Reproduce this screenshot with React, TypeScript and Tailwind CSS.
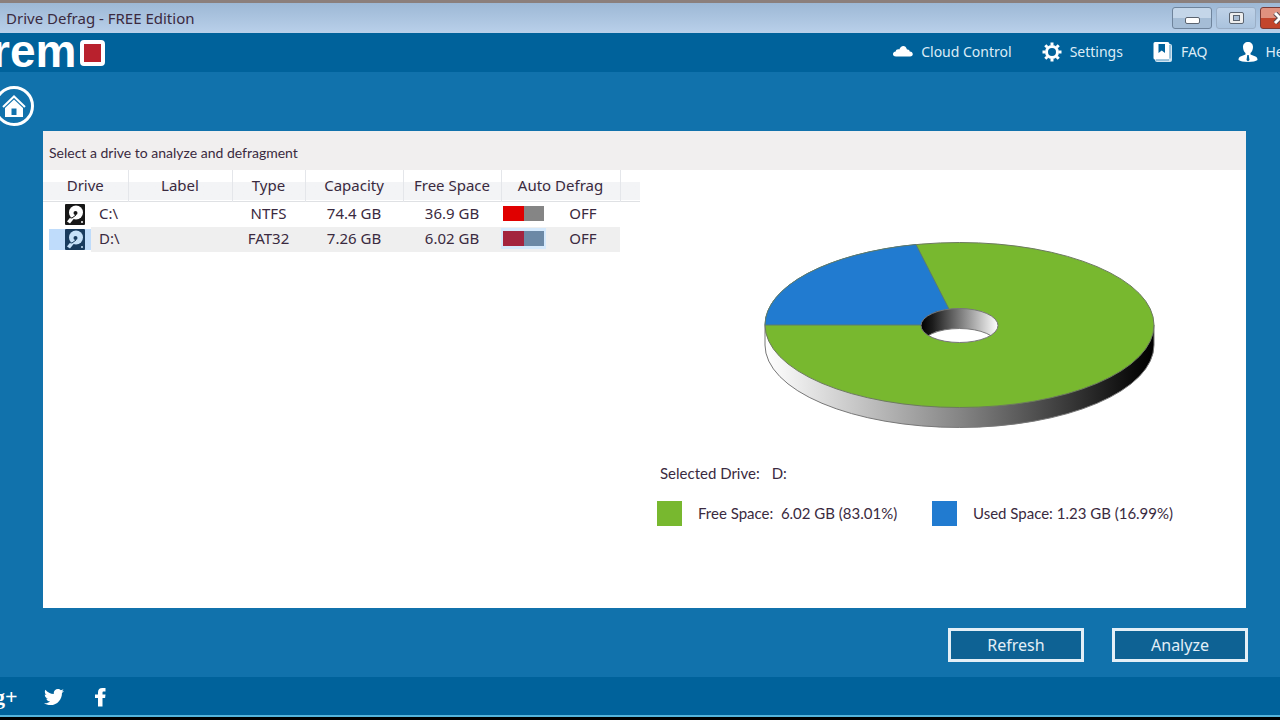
import React, { useState } from 'react';
import { FaTwitter } from 'react-icons/fa';

interface Drive {
  id: string;
  type: string;
  capacity: string;
  free: string;
}

const drives: Drive[] = [
  { id: 'C', type: 'NTFS', capacity: '74.4 GB', free: '36.9 GB' },
  { id: 'D', type: 'FAT32', capacity: '7.26 GB', free: '6.02 GB' },
];

const CloudIcon = () => (
  <svg viewBox="0 0 20 20" className="h-5 w-5" aria-hidden="true">
    <path
      fill="#fff"
      d="M3 14.500c-4 0-4-4.500-.3-5 .2-2 2.300-2.700 3.600-1.900C7.300 3.500 12.500 2 14 7.500c1.500-.3 2.600.5 2.700 2C20.500 9.500 21 14.500 17 14.500z"
    />
  </svg>
);

const GearIcon = () => (
  <svg viewBox="0 0 20 20" className="h-5 w-5" aria-hidden="true">
    <g fill="none" stroke="#fff" strokeWidth="3">
      <circle cx="10" cy="10" r="5.500" />
      <path d="M10 .5v3M10 16.500v3M.5 10h3M16.500 10h3M3.300 3.300l2 2M14.700 14.700l2 2M3.300 16.700l2-2M14.700 5.300l2-2" />
    </g>
  </svg>
);

const BookIcon = () => (
  <svg viewBox="0 0 20 20" className="h-5 w-5" aria-hidden="true">
    <path fill="#cfe3f0" d="M4 2h13a2 2 0 0 1 2 2v14a2 2 0 0 1-2 2H4a2 2 0 0 1-2-2z" />
    <path fill="#fff" d="M2 0h12.500a2 2 0 0 1 2 2v13.500a2 2 0 0 1-2 2H2a1.500 1.500 0 0 1-1.500-1.500V1.500A1.500 1.500 0 0 1 2 0z" />
    <path fill="#00629b" d="M5.500 2h6.500v9L8.700 8.500 5.500 11z" />
    <path stroke="#5d9cc3" d="M17 3v13.500M3 18h13" />
  </svg>
);

const PersonIcon = () => (
  <svg viewBox="0 0 20 20" className="h-5 w-5" aria-hidden="true">
    <path
      fill="#fff"
      d="M10 0c3 0 5 2 5 5 0 2.600-1 4.700-2.500 6v1.500l5 2c1.300.6 2 1.700 2 3.500-1.500 1.300-5 2-9.500 2s-8-.7-9.500-2c0-1.800.7-2.900 2-3.500l5-2V11C6 9.700 5 7.600 5 5c0-3 2-5 5-5z"
    />
    <path fill="#00629b" d="M9.300 13h1.400l.8 5-1.500 1.500L8.500 18z" />
  </svg>
);

const FacebookIcon = () => (
  <svg viewBox="0 0 20 20" className="h-5 w-5" aria-hidden="true">
    <path
      fill="#fff"
      d="M15.500 1v3.500h-1.800c-.9 0-1.200.4-1.200 1.300v1.700h3l-.4 3.500h-2.600V19.500H8V11H5V7.500h3V5.300C8 2.500 9.600 1 12.300 1z"
    />
  </svg>
);

const DiskIcon = ({ selected }: { selected: boolean }) => (
  <svg viewBox="0 0 20 21" className="block h-[21px] w-5" aria-hidden="true">
    <rect width="20" height="21" rx="1" fill={selected ? '#183b5e' : '#171717'} />
    <g fill={selected ? '#c5e0f8' : '#fff'}>
      <circle cx="11" cy="8.500" r="7" />
      <path d="M2 17.500l4-5 3 2-4 5z" />
      <circle cx="17" cy="18" r="1" />
    </g>
    <circle cx="10.500" cy="9" r="2" fill={selected ? '#183b5e' : '#171717'} />
    <path d="M2 13l5 1 4-3" fill="none" stroke={selected ? '#183b5e' : '#171717'} />
  </svg>
);

const HomeIcon = () => (
  <svg viewBox="0 0 24 22" className="h-[22px] w-6" aria-hidden="true">
    <path fill="none" stroke="#fff" strokeWidth="2" d="M1 12L12 1.500 23 12" />
    <path fill="#fff" d="M3 13l9-8.500 9 8.500v9H3z" />
    <path fill="#1172ac" d="M9.500 13.500h5V20h-5z" />
  </svg>
);

const UsageChart = () => (
  <svg viewBox="764 241 392 188" className="h-[188px] w-[392px]" role="img" aria-label="Drive usage">
    <defs>
      <linearGradient id="side">
        <stop offset="0" stopColor="#fff" />
        <stop offset="0.050" stopColor="#f4f4f4" />
        <stop offset="0.500" stopColor="#858585" />
        <stop offset="0.950" stopColor="#0a0a0a" />
        <stop offset="1" stopColor="#000" />
      </linearGradient>
      <linearGradient id="hole">
        <stop offset="0" stopColor="#000" />
        <stop offset="0.150" stopColor="#1c1c1c" />
        <stop offset="1" stopColor="#fff" />
      </linearGradient>
      <clipPath id="holeClip">
        <ellipse cx="959.500" cy="325.500" rx="38.500" ry="17" />
      </clipPath>
    </defs>
    <path d="M765 325v20a194.500 82.500 0 0 0 389 0v-20z" fill="url(#side)" stroke="#777" />
    <ellipse cx="959.500" cy="325" rx="194.500" ry="82.500" fill="#78b82f" stroke="#6d7a60" />
    <path d="M765 325A194.500 82.500 0 0 1 916 244.500L949 309L949 325z" fill="#217bd0" stroke="#5b7a70" />
    <ellipse cx="959.500" cy="325.500" rx="38.500" ry="17" fill="url(#hole)" />
    <ellipse cx="959.500" cy="345.500" rx="38.500" ry="17" fill="#fff" stroke="#777" clipPath="url(#holeClip)" />
    <ellipse cx="959.500" cy="325.500" rx="38.500" ry="17" fill="none" stroke="#777" />
  </svg>
);

const DriveRow = ({ drive, selected, onSelect }: { drive: Drive; selected: boolean; onSelect: () => void }) => {
  const [auto, setAuto] = useState(false);
  const cell = selected ? 'bg-[#efefef] pb-0.5' : 'pb-0.5';

  return (
    <tr onClick={onSelect} className="h-[25px]">
      <td>
        <div className="flex items-center pl-[6px]">
          <span className={`flex w-[42px] justify-end pr-1.5 ${selected ? 'bg-[#bfdcfb]' : ''}`}>
            <DiskIcon selected={selected} />
          </span>
          <span className={`h-[25px] grow pl-2 text-left leading-[23px] ${selected ? 'bg-[#efefef]' : ''}`}>
            {drive.id}:\
          </span>
        </div>
      </td>
      <td className={cell}></td>
      <td className={cell}>{drive.type}</td>
      <td className={cell}>{drive.capacity}</td>
      <td className={cell}>{drive.free}</td>
      <td className={cell}>
        <label className="flex items-center">
          <span className={`flex w-[45px] justify-center py-[3px] ${selected ? 'bg-[#d5e9fc]' : ''}`}>
            <input
              type="checkbox"
              checked={auto}
              onChange={() => setAuto(!auto)}
              className={`block h-[15px] w-[41px] appearance-none bg-linear-to-r from-50% to-50% ${
                selected ? 'from-[#a3243f] to-[#6c89a6]' : 'from-[#e00000] to-[#858585]'
              }`}
            />
          </span>
          <span className="grow">{auto ? 'ON' : 'OFF'}</span>
        </label>
      </td>
      <td></td>
    </tr>
  );
};

const headCell = 'border-r border-[#e4e6ea] font-normal';
const navLink = 'flex items-center gap-2';
const actionButton =
  'h-[34px] w-[136px] border-3 border-[#e3eff7] bg-[#0e6294] text-base leading-none text-[#e3eff7]';

const App: React.FC = () => {
  const [selected, setSelected] = useState('D');

  return (
    <div className="flex min-h-screen flex-col overflow-hidden bg-[#1172ac] font-['Noto_Sans',sans-serif] text-[#3a2a40]">
      <div className="flex h-[33px] items-center justify-between overflow-hidden border-t-3 border-[#8b7f7c] bg-linear-to-b from-[#9db8d5] to-[#b9d0ea] pl-1.5">
        <h1 className="text-[15px]">Drive Defrag - FREE Edition</h1>
        <div className="-mr-5 flex shrink-0 gap-1">
          <button
            aria-label="Minimize"
            className="flex h-[22px] w-10 items-center justify-center rounded-[3px] border border-[#6f849c] bg-linear-to-b from-[#c4d6e9] from-50% to-[#a5bdd6] to-50%"
          >
            <span className="mt-1 h-[7px] w-[15px] rounded-[2px] border border-[#5b6470] bg-white" />
          </button>
          <button
            aria-label="Maximize"
            className="flex h-[22px] w-10 items-center justify-center rounded-[3px] border border-[#9aaec6] bg-linear-to-b from-[#bfd2e8] to-[#aac3de]"
          >
            <span className="flex h-3 w-[15px] items-center justify-center rounded-[2px] border border-[#5b6470] bg-[#eee]">
              <span className="h-1.5 w-[7px] border border-[#5b6470] bg-[#a9bdd4]" />
            </span>
          </button>
          <button
            aria-label="Close"
            className="flex h-[22px] w-10 items-center justify-center rounded-[3px] border border-[#7b3a35] bg-linear-to-b from-[#e0917f] from-50% to-[#c2452c] to-50%"
          >
            <svg viewBox="0 0 14 12" className="h-3 w-3.5" aria-hidden="true">
              <path d="M2 1l10 10M12 1L2 11" stroke="#5b4a50" strokeWidth="5" />
              <path d="M2 1l10 10M12 1L2 11" stroke="#fff" strokeWidth="3" />
            </svg>
          </button>
        </div>
      </div>

      <header className="flex h-[39px] items-center justify-between overflow-hidden bg-[#00629b] pb-0.5 text-sm text-[#dcecf7]">
        <div className="-ml-2 flex items-center gap-1">
          <span className="pb-0.5 font-['Liberation_Sans',sans-serif] text-[46px] leading-9 font-bold text-white">
            rem
          </span>
          <span className="mt-0.5 h-[26px] w-[25px] rounded-[4px] border-4 border-white bg-[#b9212d]" />
        </div>
        <nav className="-mr-4 flex shrink-0 gap-[30px]">
          <a href="#cloud" className={navLink}>
            <CloudIcon />
            Cloud Control
          </a>
          <a href="#settings" className={navLink}>
            <GearIcon />
            Settings
          </a>
          <a href="#faq" className={navLink}>
            <BookIcon />
            FAQ
          </a>
          <a href="#help" className={navLink}>
            <PersonIcon />
            Help
          </a>
        </nav>
      </header>

      <main className="flex grow flex-col pt-3.5 pr-8">
        <button
          aria-label="Home"
          className="-ml-1.5 flex h-10 w-10 items-center justify-center rounded-full border-3 border-white"
        >
          <HomeIcon />
        </button>

        <section className="mt-[5px] mr-[2px] ml-[43px] grow bg-white">
          <h2 className="flex h-[39px] items-center bg-[#f1efef] px-1.5 pt-1 font-[Lato,sans-serif] text-sm">
            Select a drive to analyze and defragment
          </h2>
          <div className="flex">
            <div className="w-[597px] shrink-0">
              <table className="w-full table-fixed border-collapse text-center text-[15px] leading-5">
                <colgroup>
                  <col className="w-[85px]" />
                  <col className="w-[104px]" />
                  <col className="w-[73px]" />
                  <col className="w-[98px]" />
                  <col className="w-[98px]" />
                  <col className="w-[119px]" />
                  <col className="w-5" />
                </colgroup>
                <thead>
                  <tr className="h-[31px] border-b border-[#dfe1e4] bg-linear-to-b from-white from-40% to-[#f3f4f6] to-40%">
                    <th className={headCell}>Drive</th>
                    <th className={headCell}>Label</th>
                    <th className={headCell}>Type</th>
                    <th className={headCell}>Capacity</th>
                    <th className={headCell}>Free Space</th>
                    <th className={headCell}>Auto Defrag</th>
                    <th></th>
                  </tr>
                </thead>
                <tbody>
                  {drives.map((drive) => (
                    <DriveRow
                      key={drive.id}
                      drive={drive}
                      selected={drive.id === selected}
                      onSelect={() => setSelected(drive.id)}
                    />
                  ))}
                </tbody>
              </table>
            </div>

            <div className="grow pt-[71px] font-[Lato,sans-serif] text-[15px] leading-5">
              <div className="flex justify-center pl-[34px]">
                <UsageChart />
              </div>
              <p className="mt-[34px] flex gap-3 pl-5">
                <span>Selected Drive:</span>
                <span>{selected}:</span>
              </p>
              <div className="mt-[18px] flex pl-[17px]">
                <div className="flex w-[275px] items-center gap-4">
                  <span className="h-[25px] w-[25px] bg-[#78b82f]" />
                  <p className="pb-0.5">Free Space:&nbsp; 6.02 GB (83.01%)</p>
                </div>
                <div className="flex items-center gap-4">
                  <span className="h-[25px] w-[25px] bg-[#217bd0]" />
                  <p className="pb-0.5">Used Space: 1.23 GB (16.99%)</p>
                </div>
              </div>
            </div>
          </div>
        </section>

        <div className="flex h-[69px] items-center justify-end gap-7 pt-1">
          <button className={actionButton}>Refresh</button>
          <button className={actionButton}>Analyze</button>
        </div>
      </main>

      <footer className="flex h-[43px] items-center gap-[26px] border-b-3 border-black bg-[#00629b] text-white shadow-[inset_0_-2px_0_#55b4dc]">
        <a
          href="#google"
          aria-label="Google Plus"
          className="-ml-1.5 font-['Liberation_Serif',serif] text-[22px] leading-6 font-bold"
        >
          g+
        </a>
        <a href="#twitter" aria-label="Twitter">
          <FaTwitter className="h-5 w-5" />
        </a>
        <a href="#facebook" aria-label="Facebook">
          <FacebookIcon />
        </a>
      </footer>
    </div>
  );
};

export default App;
